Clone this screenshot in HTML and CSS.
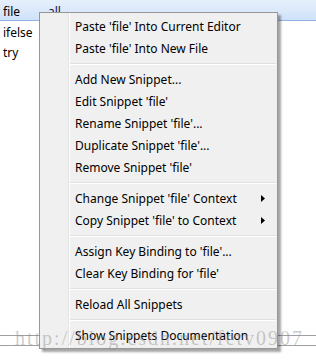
FILE: index.html
```html
<!DOCTYPE html>
<html lang="en">
<head>
	<meta charset="UTF-8">
	<title>Snippets</title>
	<link rel="stylesheet" href="styles.css">
</head>
<body>
	<section class="list">
		<div class="row current"><span class="name">file</span><span class="ctx">all</span></div>
		<div class="row"><span class="name">ifelse</span></div>
		<div class="row"><span class="name">try</span></div>
	</section>

	<div class="rules"></div>

	<ul class="menu">
		<li>Paste 'file' Into Current Editor</li>
		<li>Paste 'file' Into New File</li>
		<li class="sep"></li>
		<li>Add New Snippet...</li>
		<li>Edit Snippet 'file'</li>
		<li>Rename Snippet 'file'...</li>
		<li>Duplicate Snippet 'file'...</li>
		<li>Remove Snippet 'file'</li>
		<li class="sep"></li>
		<li class="sub">Change Snippet 'file' Context
			<svg width="4" height="7" viewBox="0 0 4 7"><polygon points="0,0 4,3.5 0,7" fill="#000"/></svg>
		</li>
		<li class="sub">Copy Snippet 'file' to Context
			<svg width="4" height="7" viewBox="0 0 4 7"><polygon points="0,0 4,3.5 0,7" fill="#000"/></svg>
		</li>
		<li class="sep"></li>
		<li>Assign Key Binding to 'file'...</li>
		<li>Clear Key Binding for 'file'</li>
		<li class="sep"></li>
		<li>Reload All Snippets</li>
		<li class="sep"></li>
		<li>Show Snippets Documentation</li>
	</ul>

	<p class="mark">http://blog.csdn.net/fetv0907</p>
</body>
</html>
```

FILE: styles.css
```css
body{
	margin:0;
	width:316px;
	height:361px;
	overflow:hidden;
	background:#fff;
	font-family:"Noto Sans","Liberation Sans",sans-serif;
	font-size:12px;
	color:#000;
}
ul,li,p{
	margin:0;
	padding:0;
	list-style:none;
}

/* snippet list */
.row{
	display:flex;
	height:20px;
	line-height:23px;
	padding-left:3px;
}
.row.current{
	background:linear-gradient(#e6f0fc,#cfe2f8);
	border-bottom:1px solid #8fb3e2;
}
.row .name{
	width:45px;
}
.row .ctx{
	color:#1a1040;
}
.rules{
	margin-top:274px;
	height:9px;
	border-top:1px solid #a0a0a0;
	border-bottom:1px solid #a0a0a0;
}

/* context menu */
.menu{
	position:absolute;
	left:39px;
	top:12px;
	width:237px;
	padding:2px 0;
	border:1px solid #979797;
	background:#f0f0f0 linear-gradient(to right,#f0f0f0 28px,#e2e3e3 28px,#e2e3e3 29px,#fff 29px,#fff 30px,#f0f0f0 30px);
	box-shadow:3px 3px 2px rgba(0,0,0,.35);
}
.menu li{
	display:flex;
	align-items:center;
	justify-content:space-between;
	height:22px;
	padding:0 12px 0 35px;
	white-space:nowrap;
}
.menu li.sep{
	height:0;
	padding:0;
	margin:4px 1px 3px 30px;
	border-top:1px solid #e0e0e0;
	border-bottom:1px solid #fff;
}

/* watermark */
.mark{
	position:absolute;
	left:15px;
	top:327px;
	font-family:"Liberation Serif",serif;
	font-size:20px;
	letter-spacing:2px;
	color:rgba(140,140,140,.45);
	white-space:nowrap;
}
```
